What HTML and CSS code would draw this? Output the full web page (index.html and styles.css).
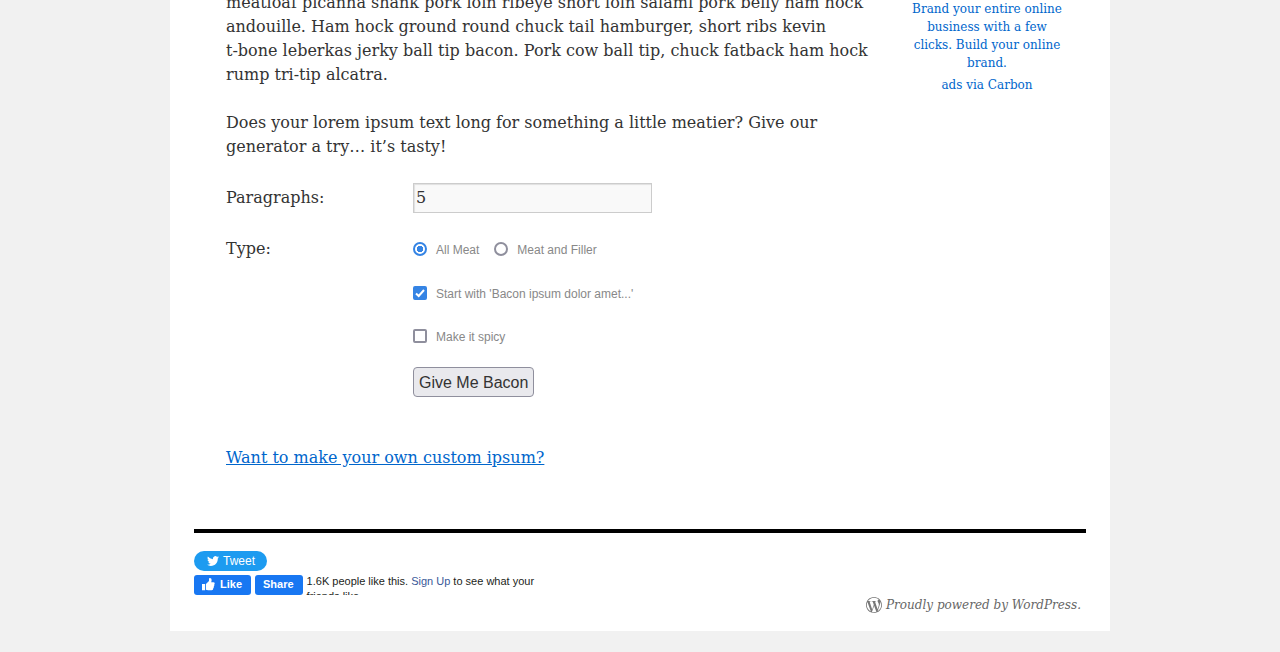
FILE: index.html
```html
<!DOCTYPE html>
<html lang="en">
<head>
<meta charset="utf-8">
<title>Bacon Ipsum</title>
<link rel="stylesheet" href="styles.css">
</head>
<body>
<div class="wrapper">
  <div class="main">
    <main class="content">
      <p>meatloaf picanha shank pork loin ribeye short loin salami pork belly ham hock andouille. Ham hock ground round chuck tail hamburger, short ribs kevin <span class="word">t-bone</span> leberkas jerky ball tip bacon. Pork cow ball tip, chuck fatback ham hock rump tri-tip alcatra.</p>
      <p>Does your lorem ipsum text long for something a little meatier? Give our generator a try… it’s tasty!</p>
      <form class="form">
        <label class="term" for="paras">Paragraphs:</label>
        <input class="number" id="paras" type="text" value="5">
        <span class="term" id="type-label">Type:</span>
        <div class="options" role="radiogroup" aria-labelledby="type-label">
          <label class="choice"><input class="radio" type="radio" name="type" checked>All Meat</label>
          <label class="choice"><input class="radio" type="radio" name="type">Meat and Filler</label>
        </div>
        <label class="choice field"><input class="check" type="checkbox" checked>Start with 'Bacon ipsum dolor amet...'</label>
        <label class="choice field"><input class="check" type="checkbox">Make it spicy</label>
        <button class="submit field" type="button">Give Me Bacon</button>
      </form>
      <p class="custom"><a href="#">Want to make your own custom ipsum?</a></p>
    </main>
    <aside class="sidebar">
      <a class="ad" href="#">Brand your entire online business with a few clicks. Build your online brand.</a>
      <a class="ad" href="#">ads via Carbon</a>
    </aside>
  </div>
  <footer class="footer">
    <a class="tweet" href="#"><svg class="bird" viewBox="0 0 24 24" aria-hidden="true"><path fill="#fff" d="M23.95 4.57a10 10 0 0 1-2.82.77 4.96 4.96 0 0 0 2.16-2.72c-.95.55-2 .95-3.13 1.18a4.92 4.92 0 0 0-8.38 4.48A13.9 13.9 0 0 1 1.64 3.16a4.92 4.92 0 0 0 1.52 6.57 4.9 4.9 0 0 1-2.23-.61v.06a4.92 4.92 0 0 0 3.95 4.83 5 5 0 0 1-2.21.08 4.94 4.94 0 0 0 4.6 3.42A9.87 9.87 0 0 1 0 19.54a13.94 13.94 0 0 0 7.55 2.21c9.05 0 14-7.5 14-13.98l-.02-.64a9.94 9.94 0 0 0 2.42-2.56z"/></svg>Tweet</a>
    <div class="facebook">
      <button class="fb" type="button"><svg class="thumb" viewBox="0 0 16 16" aria-hidden="true"><path fill="#fff" d="M0 8h3.500v7H0zM4.500 14.500V8L8 4.500V2Q8 1 9 1Q11 1 11 3.500Q11 4.500 10.500 6H13Q14.500 6 14.500 7.400Q14.500 8.300 13.900 8.700Q14.500 10 13.500 10.900Q13.800 12 12.900 12.800Q13 15 11 15H7Q5.500 15 4.500 14.500z"/></svg>Like</button>
      <button class="fb" type="button">Share</button>
      <p class="likes">1.6K people like this. <a href="#">Sign Up</a> to see what your friends like.</p>
    </div>
    <a class="powered" href="#"><svg class="wp" viewBox="0 0 24 24" aria-hidden="true"><path fill="#777" d="M21.47 6.825c.84 1.537 1.318 3.3 1.318 5.175 0 3.979-2.156 7.456-5.363 9.325l3.295-9.527c.615-1.54.82-2.771.82-3.864 0-.405-.026-.78-.07-1.11m-7.981.105c.647-.03 1.232-.105 1.232-.105.582-.075.514-.93-.067-.899 0 0-1.755.135-2.88.135-1.064 0-2.85-.15-2.85-.15-.585-.03-.661.855-.075.885 0 0 .54.061 1.125.09l1.68 4.605-2.37 7.08L5.354 6.9c.649-.03 1.234-.1 1.234-.1.585-.075.516-.93-.065-.896 0 0-1.746.138-2.874.138-.2 0-.438-.008-.69-.015C4.911 3.15 8.235 1.215 12 1.215c2.809 0 5.365 1.072 7.286 2.833-.046-.003-.091-.009-.141-.009-1.06 0-1.812.923-1.812 1.914 0 .89.513 1.643 1.06 2.531.411.72.89 1.643.89 2.977 0 .915-.354 1.994-.821 3.479l-1.075 3.585-3.9-11.61.002.015M12 22.784c-1.059 0-2.081-.153-3.048-.437l3.237-9.406 3.315 9.087c.024.053.05.101.078.149-1.12.393-2.325.609-3.582.609M1.211 12c0-1.564.336-3.05.935-4.39L7.29 21.709C3.694 19.96 1.212 16.271 1.211 12M12 0C5.385 0 0 5.385 0 12s5.385 12 12 12 12-5.385 12-12S18.615 0 12 0"/></svg>Proudly powered by WordPress.</a>
  </footer>
</div>
</body>
</html>
```
FILE: styles.css
```css
* {
  box-sizing: border-box;
}

body {
  margin: 0;
  overflow: hidden;
  background: #f1f1f1;
  color: #333;
  font: 16px/24px "DejaVu Serif", serif;
}

a {
  color: #0066cc;
}

p {
  margin: 0 0 24px;
}

/* The article is scrolled partly past the top edge. */
.wrapper {
  max-width: 940px;
  margin: -9px auto 21px;
  padding: 0 24px;
  background: #fff;
}

.main {
  display: flex;
  gap: 40px;
  padding: 0 24px 35px 32px;
}

.content {
  flex: 1;
}

.word {
  white-space: nowrap;
}

.form {
  display: grid;
  grid-template-columns: 187px 1fr;
  justify-items: start;
  align-items: center;
}

.term {
  line-height: 30px;
}

.number {
  width: 239px;
  height: 30px;
  padding: 1px 2px 3px;
  border: 1px solid #ccc;
  background: #f9f9f9;
  box-shadow: inset 1px 1px 1px rgba(0, 0, 0, 0.1);
  color: #333;
  font: inherit;
}

.options {
  display: flex;
  gap: 15px;
}

#type-label {
  margin: 21px 0;
}

.options {
  margin: 23px 0 21px;
}

.choice {
  display: flex;
  align-items: center;
  gap: 9px;
  color: #888;
  font: 12px/18px "Liberation Sans", Arial, sans-serif;
}

.field {
  grid-column: 2;
}

.choice.field {
  margin-bottom: 25px;
}

.submit.field {
  margin-top: -4px;
}

.radio,
.check {
  appearance: none;
  width: 14px;
  height: 14px;
  margin: 0 0 2px;
  border: 2px solid #8f8f9d;
  background: #fff;
}

.radio {
  border-radius: 50%;
}

.check {
  border-radius: 2px;
}

.radio:checked {
  border-color: #3584e4;
  background: radial-gradient(circle, #3584e4 2px, #3584e4 3px, #fff 3px) padding-box;
}

.check:checked {
  border-color: #3584e4;
  background: #3584e4 url("data:image/svg+xml,%3Csvg xmlns='http://www.w3.org/2000/svg' viewBox='0 0 10 10'%3E%3Cpath d='M1 5.500L3.700 8L9 2' fill='none' stroke='white' stroke-width='2'/%3E%3C/svg%3E");
}

.submit {
  height: 30px;
  padding: 2px 5px 0;
  border: 1px solid #8f8f9d;
  border-radius: 4px;
  background: #e9e9ed;
  color: #333;
  font: 16px/24px "Liberation Sans", Arial, sans-serif;
}

.custom {
  margin-top: 49px;
}

.sidebar {
  display: flex;
  flex-direction: column;
  gap: 4px;
  width: 150px;
  padding-top: 9px;
  text-align: center;
}

.ad {
  font-size: 12px;
  line-height: 18px;
  text-decoration: none;
}

.footer {
  display: flex;
  flex-direction: column;
  align-items: flex-start;
  padding: 18px 0 17px;
  border-top: 4px solid #000;
}

.tweet {
  display: flex;
  align-items: center;
  gap: 3px;
  height: 20px;
  padding: 0 12px;
  border-radius: 10px;
  background: #1d9bf0;
  color: #fff;
  font: 12px/20px "Liberation Sans", Arial, sans-serif;
  text-decoration: none;
}

.bird {
  width: 14px;
  height: 12px;
}

.facebook {
  display: flex;
  gap: 4px;
  height: 20px;
  margin: 4px 0 1px;
  overflow: hidden;
  font: 11px/15px "Liberation Sans", Arial, sans-serif;
}

.fb {
  display: flex;
  align-items: center;
  gap: 4px;
  height: 20px;
  padding: 0 9px 2px 8px;
  border: 0;
  border-radius: 3px;
  background: #1877f2;
  color: #fff;
  font: bold 11px/18px "Liberation Sans", Arial, sans-serif;
}

.thumb {
  width: 14px;
  height: 14px;
}

.likes {
  width: 240px;
  margin: -1px 0 0;
  color: #1c1e21;
}

.likes a {
  color: #385898;
  text-decoration: none;
}

.powered {
  display: flex;
  align-items: center;
  gap: 4px;
  align-self: flex-end;
  margin-right: 5px;
  color: #666;
  font-size: 12px;
  font-style: italic;
  line-height: 18px;
  text-decoration: none;
}

.wp {
  width: 16px;
  height: 16px;
}
```
